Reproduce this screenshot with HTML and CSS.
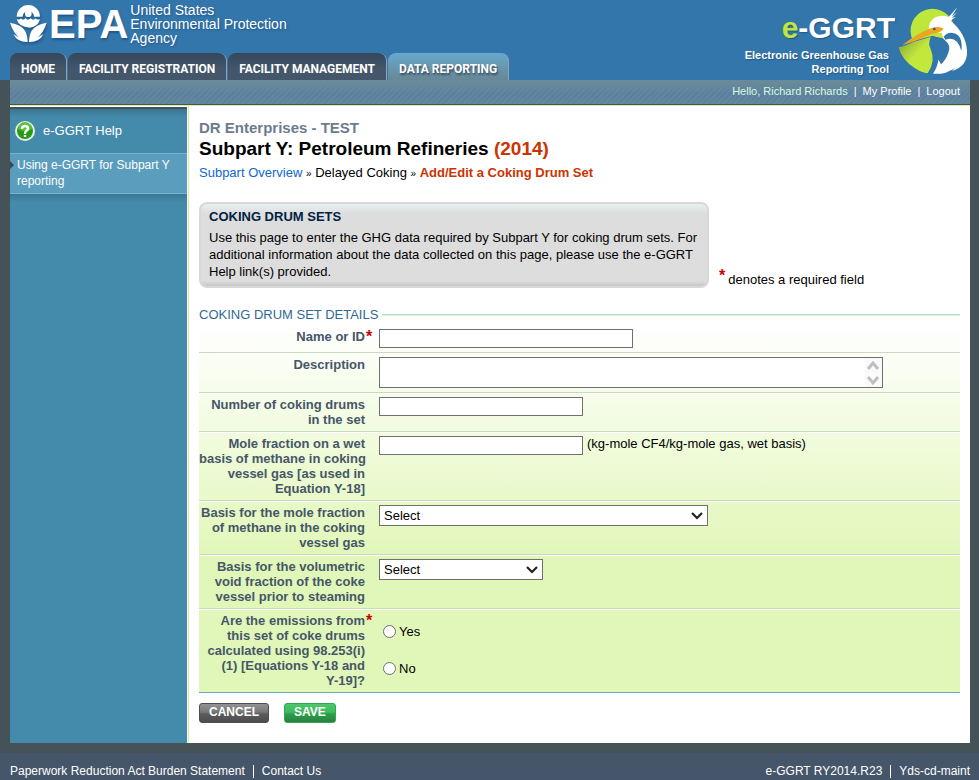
FILE: index.html
```html
<!DOCTYPE html>
<html lang="en">
<head>
    <meta charset="UTF-8">
    <meta name="viewport" content="width=device-width, initial-scale=1.0">
    <title>e-GGRT - Add/Edit a Coking Drum Set</title>
    <link rel="stylesheet" href="styles.css">
</head>
<body>
    <header class="header">
        <div class="header-left">
            <div class="epa">
                <svg class="epa-flower" width="37" height="38" viewBox="0 0 111 114" aria-hidden="true">
                    <path fill="#fff" d="M20 35a35 35 0 0 1 70 0l-18 0a17 17 0 1 0-34 0z"/>
                    <circle cx="55" cy="26" r="10" fill="#fff"/>
                    <path fill="#fff" d="M20 42q9 4 12-2 8 8 14 0 8 8 16 0 8 8 15 0 4 6 13 2-6 24-31 26-33-2-39-26z"/>
                    <path fill="#fff" d="M0 53q34 6 45 24 7 12 8 34Q22 112 10 88q8 4 18 10Q10 84 0 53z"/>
                    <path fill="#fff" d="M110 53q-34 6-45 24-7 12-8 34 31 1 43-23-8 4-18 10 18-14 28-45z"/>
                </svg>
                <span class="epa-name">EPA</span>
                <span class="epa-full">United States<br>Environmental Protection<br>Agency</span>
            </div>
            <nav class="tabs">
                <a href="#">HOME</a>
                <a href="#">FACILITY REGISTRATION</a>
                <a href="#">FACILITY MANAGEMENT</a>
                <a href="#" class="active">DATA REPORTING</a>
            </nav>
        </div>
        <div class="ggrt">
            <div class="ggrt-text">
                <div class="ggrt-name"><span>e</span>-GGRT</div>
                <div class="ggrt-sub">Electronic Greenhouse Gas<br>Reporting Tool</div>
            </div>
            <svg class="ggrt-bird" width="72" height="72" viewBox="530 10 216 216" aria-hidden="true">
                <defs>
                    <linearGradient id="leaf" x1="0" y1="0" x2="1" y2="1">
                        <stop offset="0" stop-color="#7d9a3c"/>
                        <stop offset="0.5" stop-color="#c2e83c"/>
                        <stop offset="1" stop-color="#c2e83c"/>
                    </linearGradient>
                </defs>
                <path fill="#bfe63a" d="M572 106a65 65 0 1 1 129-26q0 26-16 46-20-10-48-18l-60 16z"/>
                <path fill="url(#leaf)" d="M535 143q14-2 46-17l50-14q-9 22 0 36 16 38-9 73-18-2-38-15-40-25-49-63z"/>
                <path fill="#fff" d="M625 84q2-20 20-31 18-9 40-1l26-29-17 28 17-14-16 18 12-4-16 12q47 40 49 92 2 45-46 60l10-9-28 13q-18 5-38 3 14-20 16-43 5 10 8 15 15-14 22-35 9-23-9-36-12-12-9-24-16 3-31-2z"/>
                <path fill="#3276ab" d="M670 111q13-17 31-10 28 8 22 53-10-38-34-37-13 1-13 5z"/>
                <path fill="#3276ab" d="M640 111l26 4q17 12 10 29-8 25-20 40-10-20-16-38-6-16 0-35z"/>
                <path fill="#eba622" d="M546 137q44-37 88-52 24-7 36 2-10 14-34 15l-50 21z"/>
                <circle cx="642" cy="88" r="4" fill="#456"/>
            </svg>
        </div>
    </header>

    <div class="page">
        <div class="userbar">
            <span>Hello, Richard Richards</span><i>|</i><a href="#">My Profile</a><i>|</i><a href="#">Logout</a>
        </div>
        <div class="columns">
            <aside class="side">
                <a href="#" class="help">
                    <svg width="22" height="22" viewBox="0 0 22 22" aria-hidden="true">
                        <circle cx="11" cy="11" r="10" fill="#e8efe8"/>
                        <circle cx="11" cy="11" r="8" fill="#269a15"/>
                        <path fill="#5cc13d" d="M4 9a7 7 0 0 1 14 0q-7 4-14 0z"/>
                        <path fill="none" stroke="#fff" stroke-width="2.4" d="M8 9q0-3 3-3t3 3q0 1-2 2-1 1-1 3M11 15v2"/>
                    </svg>
                    e-GGRT Help
                </a>
                <a href="#" class="help-topic">Using e-GGRT for Subpart Y reporting</a>
                <div class="side-shade"></div>
            </aside>

            <main class="main">
                <h2 class="company">DR Enterprises - TEST</h2>
                <h1>Subpart Y: Petroleum Refineries <span>(2014)</span></h1>
                <div class="crumbs"><a href="#">Subpart Overview</a> <small>»</small> Delayed Coking <small>»</small> <b>Add/Edit a Coking Drum Set</b></div>

                <div class="intro">
                    <div class="intro-box">
                        <h3>COKING DRUM SETS</h3>
                        <p>Use this page to enter the GHG data required by Subpart Y for coking drum sets. For additional information about the data collected on this page, please use the e-GGRT Help link(s) provided.</p>
                    </div>
                    <p class="required-note"><span class="star">*</span> denotes a required field</p>
                </div>

                <form>
                    <h3 class="section-title">COKING DRUM SET DETAILS</h3>
                    <div class="rows">
                        <div class="row">
                            <label for="name">Name or ID</label><span class="star">*</span>
                            <div><input type="text" id="name" class="wide"></div>
                        </div>
                        <div class="row">
                            <label for="description">Description</label><span></span>
                            <div class="area">
                                <textarea id="description"></textarea>
                                <svg class="scroll" width="17" height="29" viewBox="0 0 17 29" aria-hidden="true">
                                    <path fill="#fafafa" d="M0 0h17v29H0z"/>
                                    <path fill="none" stroke="#bfbfbf" stroke-width="3" d="M3 11l5-6 5 6M3 19l5 6 5-6"/>
                                </svg>
                            </div>
                        </div>
                        <div class="row">
                            <label for="drums">Number of coking drums in the set</label><span></span>
                            <div><input type="text" id="drums"></div>
                        </div>
                        <div class="row">
                            <label for="mole">Mole fraction on a wet <span class="nobr">basis of methane in coking</span> vessel gas [as used in Equation Y-18]</label><span></span>
                            <div class="with-unit"><input type="text" id="mole"><span>(kg-mole CF4/kg-mole gas, wet basis)</span></div>
                        </div>
                        <div class="row">
                            <label for="mole-basis">Basis for the mole fraction of methane in the coking vessel gas</label><span></span>
                            <div class="drop drop-wide">
                                <select id="mole-basis"><option>Select</option></select>
                                <svg class="chevron" width="12" height="8" viewBox="0 0 12 8" aria-hidden="true"><path fill="none" stroke="#222" stroke-width="2.2" d="M1 1l5 5 5-5"/></svg>
                            </div>
                        </div>
                        <div class="row">
                            <label for="void-basis">Basis for the volumetric void fraction of the coke vessel prior to steaming</label><span></span>
                            <div class="drop">
                                <select id="void-basis"><option>Select</option></select>
                                <svg class="chevron" width="12" height="8" viewBox="0 0 12 8" aria-hidden="true"><path fill="none" stroke="#222" stroke-width="2.2" d="M1 1l5 5 5-5"/></svg>
                            </div>
                        </div>
                        <div class="row" role="radiogroup" aria-labelledby="emissions">
                            <span class="label" id="emissions">Are the emissions from this set of coke drums calculated using 98.253(i)<wbr>(1) [Equations Y-18 and <span class="nobr">Y-19]?</span></span><span class="star">*</span>
                            <div>
                                <label class="choice"><input type="radio" name="emissions">Yes</label>
                                <label class="choice"><input type="radio" name="emissions">No</label>
                            </div>
                        </div>
                    </div>
                    <div class="buttons">
                        <button type="button" class="cancel">CANCEL</button>
                        <button type="submit" class="save">SAVE</button>
                    </div>
                </form>
            </main>
        </div>
    </div>

    <footer class="footer">
        <div><a href="#">Paperwork Reduction Act Burden Statement</a><i></i><a href="#">Contact Us</a></div>
        <div><span>e-GGRT RY2014.R23</span><i></i><span>Yds-cd-maint</span></div>
    </footer>
</body>
</html>
```
FILE: styles.css
```css
* {
    box-sizing: border-box;
}
html {
    background: #46566a;
}
body {
    margin: 0;
    background: #455359;
    color: #000;
    font-family: "Liberation Sans", Arial, sans-serif;
    font-size: 13px;
    line-height: 16px;
}
h1, h2, h3, p {
    margin: 0;
}
a {
    color: inherit;
    text-decoration: none;
}
.nobr {
    white-space: nowrap;
}

/* header */
.header {
    display: flex;
    justify-content: space-between;
    height: 80px;
    padding: 0 10px;
    background: #3276ab;
    color: #fff;
}
.header-left {
    display: flex;
    flex-direction: column;
    justify-content: space-between;
}
.epa {
    display: flex;
    height: 48px;
}
.epa-flower {
    margin: 5px 2px 0 0;
    filter: drop-shadow(1px 2px 1px #24588a);
}
.epa-name {
    font-size: 40px;
    font-weight: bold;
    line-height: 48px;
    text-shadow: 1px 2px 2px #24588a;
}
.epa-full {
    margin: 3px 0 0 2px;
    font-size: 14px;
    line-height: 14px;
    text-shadow: 1px 1px 2px #24588a;
}
.tabs {
    display: flex;
    gap: 1px;
    font-family: Roboto, "Liberation Sans", sans-serif;
    font-size: 12px;
    font-weight: bold;
    line-height: 28px;
}
.tabs a {
    padding: 2px 11px 0;
    height: 27px;
    border-right: 1px solid #8fa3b3;
    border-radius: 8px 8px 0 0;
    background: linear-gradient(#35475a, #44566a 60%);
    white-space: nowrap;
}
.tabs .active {
    background: linear-gradient(#66a9cc, #678796);
    text-shadow: 1px 2px 2px #35475a;
}
.ggrt {
    display: flex;
}
.ggrt-text {
    padding-top: 8px;
    text-align: right;
    font-weight: bold;
    text-shadow: 1px 1px 1px #24588a;
}
.ggrt-name {
    font-size: 30px;
    line-height: 40px;
}
.ggrt-name span {
    color: #bfe63a;
}
.ggrt-sub {
    padding-right: 6px;
    font-size: 11px;
    line-height: 14px;
}
.ggrt-bird {
    margin: 3px 0 0 2px;
}

/* page frame */
.page {
    margin: 0 9px 0 10px;
    background: #fff;
}
.userbar {
    display: flex;
    justify-content: flex-end;
    height: 25px;
    padding: 0 10px;
    border-bottom: 1px solid #455359;
    background:
        linear-gradient(#688a9a 10%, transparent 60%, #688a9a88),
        repeating-linear-gradient(135deg, #62869f 0 2px, #597e9f 2px 4px);
    color: #fff;
    font-size: 11px;
    line-height: 23px;
}
.userbar span {
    color: #d9fbe0;
}
.userbar i {
    margin: 0 6px;
    font-style: normal;
}
.columns {
    display: flex;
    border-top: 1px solid #d7f0a0;
}
.side {
    width: 177px;
    margin-top: 1px;
    border-top: 2px solid #455359;
    background: linear-gradient(#3a748f, #448aaa 8px);
    color: #fff;
    flex: none;
}
.help {
    display: flex;
    align-items: center;
    gap: 7px;
    height: 44px;
    padding: 0 4px;
}
.help-topic {
    display: block;
    position: relative;
    padding: 3px 7px 4px;
    border: solid #74b4d0;
    border-width: 1px 0;
    background: #5a9dbd;
    font-size: 12px;
}
.help-topic::before {
    content: "";
    position: absolute;
    left: 0;
    top: 7px;
    border: 4px solid transparent;
    border-left-color: #394850;
    border-right: 0;
}
.side-shade {
    height: 8px;
    background: linear-gradient(#3a7896, #448aaa);
}

/* content */
.main {
    flex: 1;
    margin-left: 1px;
    padding: 13px 10px 20px;
    border-left: 1px solid #d7f0a0;
}
.company {
    color: #6b7c8c;
    font-size: 15px;
    line-height: 18px;
}
h1 {
    font-size: 19px;
    line-height: 24px;
}
h1 span, .crumbs b {
    color: #cc3300;
}
.crumbs {
    margin-top: 3px;
    line-height: 18px;
}
.crumbs a {
    color: #1166cc;
}
.crumbs small {
    font-size: 10px;
}
.intro {
    display: flex;
    align-items: flex-end;
    margin-top: 19px;
}
.intro-box {
    width: 510px;
    padding: 3px 2px 6px 8px;
    border: 2px solid #d8d8d8;
    border-radius: 8px;
    background: linear-gradient(#e6f0f0, #ddd 10px calc(100% - 5px), #c6c6c6);
}
.intro-box h3 {
    color: #002244;
    font-size: 13px;
    line-height: 20px;
    margin-bottom: 2px;
}
.intro-box p {
    line-height: 17px;
}
.star {
    color: #cc0000;
    font-size: 16px;
    font-weight: bold;
    line-height: 16px;
}
.required-note {
    display: flex;
    align-items: flex-end;
    gap: 3px;
    padding-left: 10px;
}
.required-note .star {
    margin-bottom: 4px;
}
.section-title {
    display: flex;
    align-items: center;
    gap: 4px;
    margin-top: 18px;
    padding-bottom: 1px;
    color: #2f6a94;
    font-size: 13px;
    font-weight: normal;
    line-height: 18px;
}
.section-title::after {
    content: "";
    flex: 1;
    border-top: 1px solid #b0d9ec;
    border-bottom: 1px solid #dff3bd;
}
.rows {
    border-bottom: 1px solid #68aabb;
    background: linear-gradient(#fff, #e1f7b9 230px);
}
.row {
    display: grid;
    grid-template-columns: 166px 14px 1fr;
    padding: 4px 0;
    border-bottom: 1px solid #c9d9b9;
    box-shadow: 0 1px #fff;
}
.row:last-child {
    border-bottom: 0;
    box-shadow: none;
}
.row > label, .row > .label {
    color: #465668;
    font-weight: bold;
    line-height: 15px;
    text-align: right;
}
.row > .star {
    padding-left: 1px;
    height: 15px;
}
input[type="text"], textarea, select {
    display: block;
    width: 204px;
    height: 19px;
    margin: 0;
    padding: 0 4px;
    border: 1px solid #707070;
    border-radius: 0;
    background: #fff;
    color: #000;
    font: inherit;
}
input[type="text"].wide {
    width: 254px;
}
.area, .drop {
    position: relative;
}
.area {
    width: 504px;
}
textarea {
    width: 100%;
    height: 31px;
    resize: none;
    overflow: hidden;
}
.scroll {
    position: absolute;
    right: 1px;
    top: 1px;
}
.with-unit {
    display: flex;
    gap: 4px;
}
.drop {
    width: 164px;
}
.drop-wide {
    width: 329px;
}
select {
    width: 100%;
    height: 21px;
    appearance: none;
}
.chevron {
    position: absolute;
    right: 5px;
    top: 7px;
    pointer-events: none;
}
.choice {
    display: flex;
    align-items: center;
    gap: 3px;
    height: 37px;
    padding-left: 4px;
}
.choice input {
    width: 13px;
    height: 13px;
    margin: 0;
    appearance: none;
    border: 1px solid #707070;
    border-radius: 50%;
    background: #fff;
}
.choice input:checked {
    box-shadow: inset 0 0 0 3px #fff;
    background: #222;
}
.buttons {
    display: flex;
    gap: 15px;
    margin-top: 10px;
}
button {
    height: 20px;
    padding: 0 9px 2px;
    border: 1px solid #4d4d4d;
    border-radius: 3px;
    color: #fff;
    font-family: inherit;
    font-size: 12px;
    font-weight: bold;
}
.cancel {
    background: linear-gradient(#929292, #777 45%, #5c5c5c 55%, #4d4d4d);
}
.save {
    border-color: #35a552;
    background: linear-gradient(#4cc76c, #3dbb5e 45%, #2f9d4b 55%, #278341);
}

/* footer */
.footer {
    display: flex;
    justify-content: space-between;
    margin-top: 10px;
    padding: 10px 9px 2px 10px;
    background: #46566a;
    color: #fff;
    font-size: 12px;
}
.footer div {
    display: flex;
    align-items: center;
}
.footer i {
    width: 1px;
    height: 13px;
    margin: 0 8px;
    background: #fff;
}
```
